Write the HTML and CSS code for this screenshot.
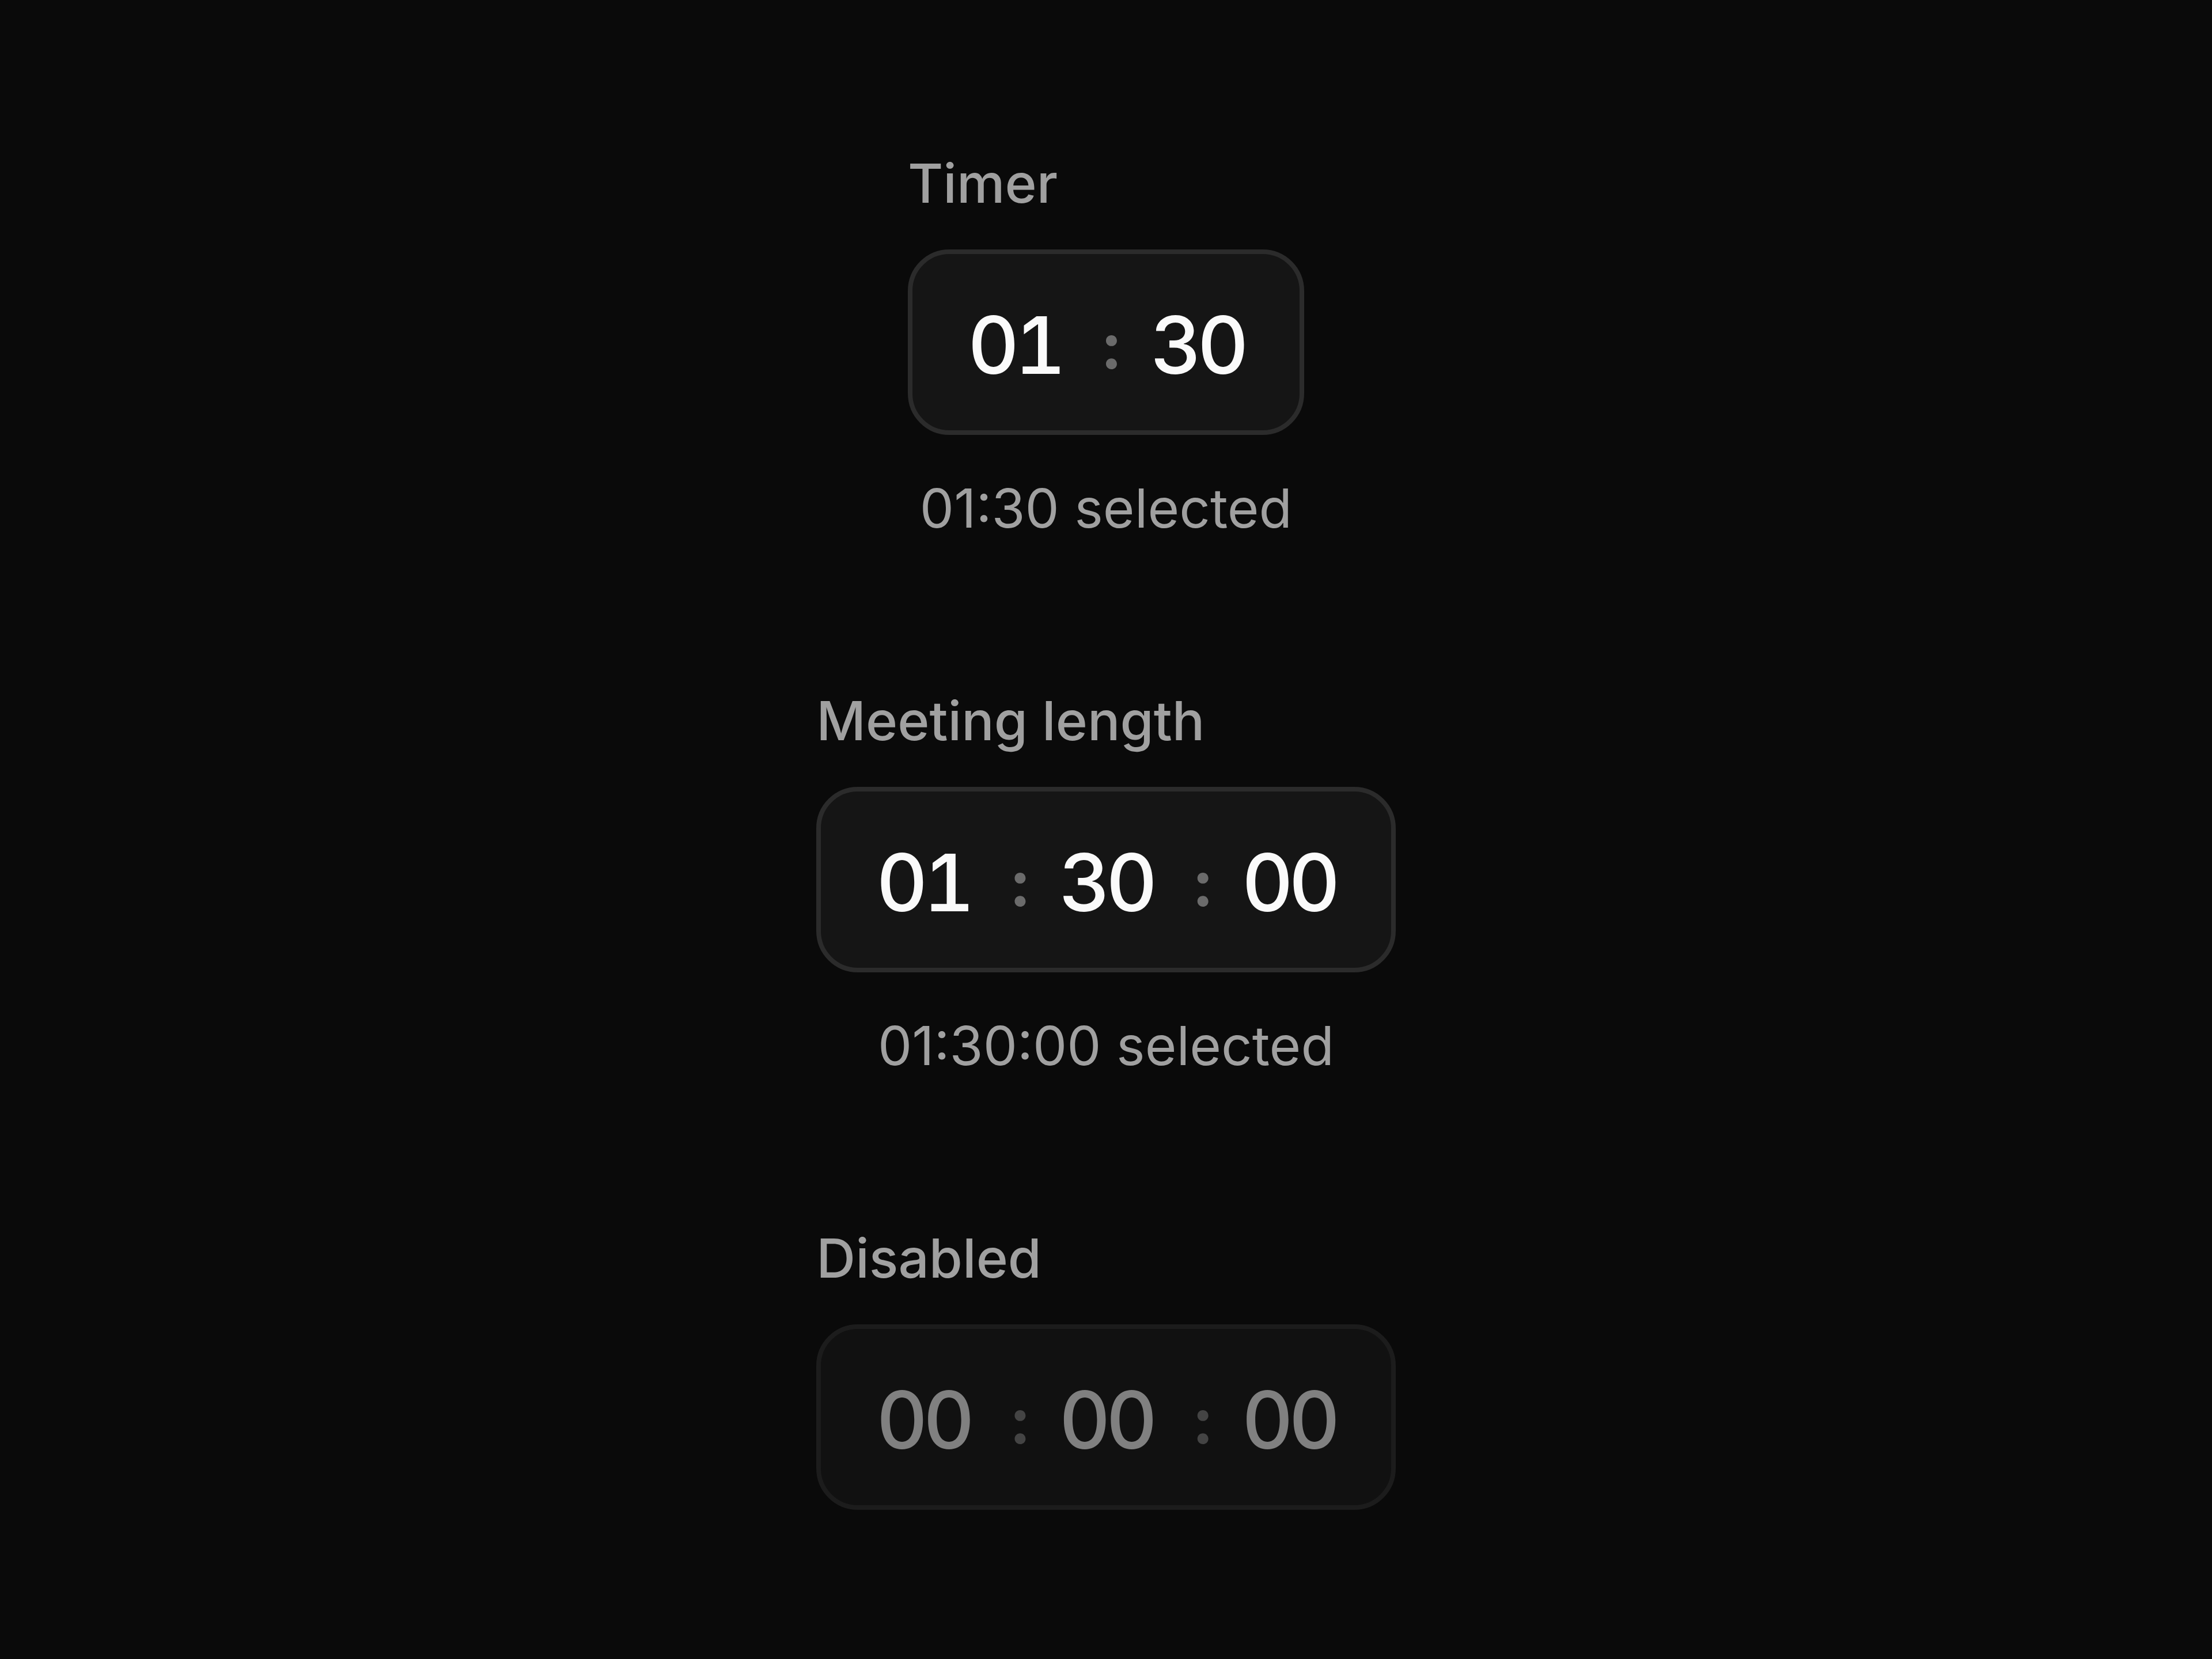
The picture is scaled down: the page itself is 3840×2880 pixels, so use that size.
FILE: index.html
```html
<!DOCTYPE html>
<html lang="en">
<head>
    <meta charset="UTF-8">
    <meta name="viewport" content="width=device-width, initial-scale=1.0">
    <title>Time fields</title>
    <link rel="stylesheet" href="styles.css">
</head>
<body>
    <main id="page">
        <div class="field">
            <div class="label">Timer</div>
            <div class="timebox">
                <span class="seg">01</span>
                <span class="sep">:</span>
                <span class="seg">30</span>
            </div>
            <div class="caption">01:30 selected</div>
        </div>

        <div class="field">
            <div class="label">Meeting length</div>
            <div class="timebox">
                <span class="seg">01</span>
                <span class="sep">:</span>
                <span class="seg">30</span>
                <span class="sep">:</span>
                <span class="seg">00</span>
            </div>
            <div class="caption">01:30:00 selected</div>
        </div>

        <div class="field">
            <div class="label">Disabled</div>
            <div class="timebox disabled">
                <span class="seg">00</span>
                <span class="sep">:</span>
                <span class="seg">00</span>
                <span class="sep">:</span>
                <span class="seg">00</span>
            </div>
        </div>
    </main>
</body>
</html>
```

FILE: styles.css
```css
html, body{
    margin: 0;
    background: #0a0a0a;
    font-family: Inter, "Noto Sans", sans-serif;
}
#page{
    min-height: 2880px;
    box-sizing: border-box;
    padding-top: 248px;
    display: flex;
    flex-direction: column;
    align-items: center;
}
.field{
    display: flex;
    flex-direction: column;
    align-items: flex-start;
    margin-bottom: 229px;
}
.label{
    font-size: 94px;
    line-height: 140px;
    font-weight: 500;
    color: #a0a0a0;
    margin-bottom: 45px;
}
.timebox{
    display: flex;
    align-items: center;
    height: 322px;
    box-sizing: border-box;
    padding: 10px 96px 0;
    border: 8px solid #2b2b2b;
    border-radius: 72px;
    background: #151515;
}
.seg{
    font-size: 138px;
    line-height: 1;
    font-weight: 500;
    letter-spacing: -8px;
    color: #fafafa;
    font-variant-numeric: tabular-nums;
}
.sep{
    font-size: 112px;
    line-height: 1;
    font-weight: 700;
    color: #6b6b6b;
    margin: 0 49px 0 68px;
}
.caption{
    align-self: center;
    font-size: 94px;
    line-height: 140px;
    color: #a0a0a0;
    margin-top: 57px;
}

.timebox.disabled{
    border-color: #1c1c1c;
    background: #111111;
}
.timebox.disabled .seg{
    color: #808080;
}
.timebox.disabled .sep{
    color: #444444;
}
```
